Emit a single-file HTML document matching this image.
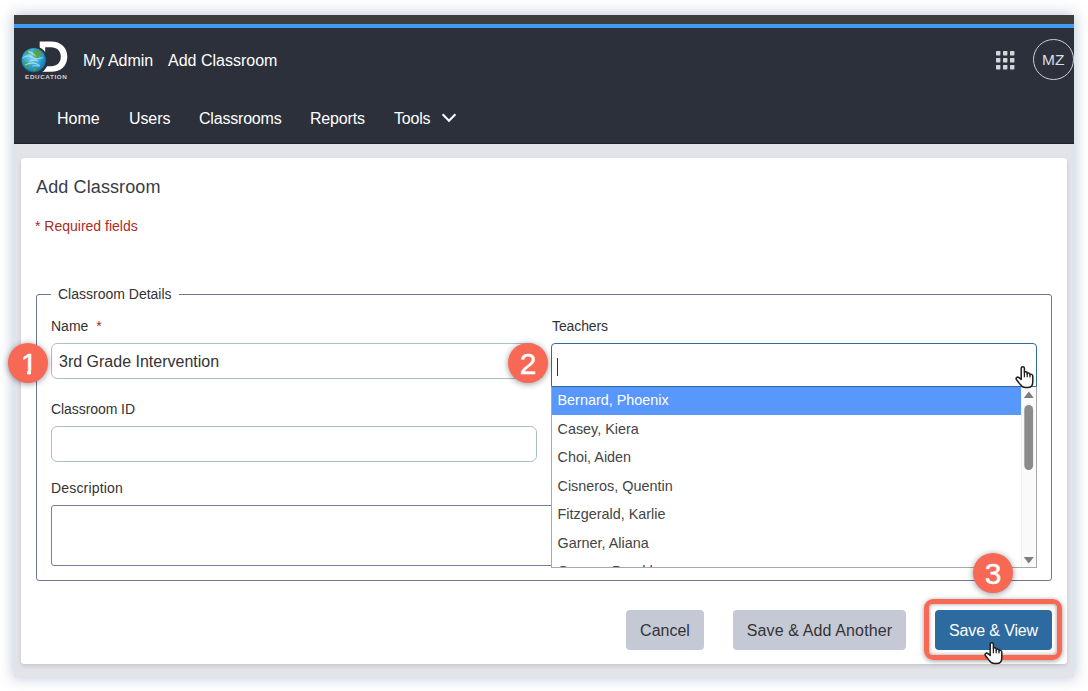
<!DOCTYPE html>
<html lang="en">
<head>
<meta charset="utf-8">
<title>Add Classroom</title>
<style>
*{box-sizing:border-box;margin:0;padding:0}
html,body{width:1088px;height:691px;overflow:hidden;background:#fff}
body{font-family:"Liberation Sans",Arial,sans-serif;position:relative;color:#333}
.frame{position:absolute;left:14px;top:15px;width:1060px;height:662px;background:#e3e4ea;box-shadow:0 0 13px 1px rgba(100,122,165,.42);overflow:hidden}
.abs{position:absolute;white-space:nowrap}
.topbar{position:absolute;left:0;top:0;width:100%;height:9px;background:#3d3d3d}
.bluebar{position:absolute;left:0;top:9px;width:100%;height:4px;background:#3f9cf0}
.header{position:absolute;left:0;top:13px;width:100%;height:116px;background:#2c303b;border-bottom:1px solid #20232c}
.hd{color:#fff;font-size:16px;line-height:20px}
.panel{position:absolute;left:7px;top:143px;width:1046px;height:506px;background:#fff;border-radius:3px;box-shadow:0 2px 4px rgba(0,0,0,.13)}
.lbl{font-size:14px;line-height:18px;color:#333}
.inp{position:absolute;background:#fff;border:1px solid #a9bfc9;border-radius:6px}
.badge{position:absolute;width:40px;height:40px;border-radius:50%;background:#f76855;color:#fff;font-size:30px;line-height:42px;-webkit-text-stroke:.4px #fff;text-align:center;box-shadow:0 1px 6px rgba(0,0,0,.42)}
.btn{position:absolute;height:40px;border-radius:4px;font-size:16px;line-height:41px;text-align:center;color:#333;background:#c5c9d6}
.opt{position:absolute;left:0;width:469px;height:28.4px;font-size:14.4px;line-height:28.4px;padding-left:5.5px;color:#444}
</style>
</head>
<body>
<div class="frame">
  <div class="topbar"></div>
  <div class="bluebar"></div>
  <div class="header"></div>
  <div class="panel"></div>
</div>

<!-- header -->
<svg class="abs" style="left:18px;top:38px" width="56" height="46" viewBox="18 38 56 46">
  <defs>
    <radialGradient id="gl" cx="0.42" cy="0.38" r="0.68">
      <stop offset="0" stop-color="#7fd6ee"/>
      <stop offset="0.5" stop-color="#2fa9d8"/>
      <stop offset="1" stop-color="#0f6fa6"/>
    </radialGradient>
  </defs>
  <path fill-rule="evenodd" d="M39.7 41.6 H51 C61 41.6 67.3 47.8 67.3 56.7 C67.3 65.6 61 71.8 51 71.8 H39.7 Z M45.2 47.2 H51 C57 47.2 60.8 51 60.8 56.7 C60.8 62.4 57 66.2 51 66.2 H45.2 Z" fill="#fff"/>
  <circle cx="34.2" cy="60.6" r="14" fill="#2c303b"/>
  <circle cx="33.7" cy="60" r="12.1" fill="url(#gl)"/>
  <path d="M24.3 54 q2 -3.5 5.5 -4.6 q1.6 .8 -.6 2.8 q-1.200 2.800 -4.900 1.800 z M33.800 50.400 q3.400 -1.600 6.800 .6 q2.200 2.200 1.600 4.400 q-2.400 -.6 -3.200 1.400 q-1.400 2.600 -3.400 1.200 q-2.200 .4 -3 -1.800 q1.200 -1.800 .2 -3.400 q.2 -1.800 1 -2.400z M23.800 61 q3.200 .4 4.800 3.600 q1.400 3 -.2 4 q-3.600 -2.400 -4.600 -7.600z M32.600 68.600 q2.200 -2 4.800 -.6 q-.4 2.600 -3.600 3.200 q-1.600 -1 -1.200 -2.600z" fill="#5a9c3c" opacity=".85"/>
  <path d="M23 57.800 q5 -3.600 9.800 -.6 q4.200 2.600 9.800 .4 M25.500 64.800 q7 -3.800 14 .4 M28.500 51.500 q4.500 1 6.500 4.500 M30 61 q4 -2 8 0 M33 66 q3 -1 6 .5" stroke="#eafaff" stroke-width="1.300" fill="none" opacity=".5" stroke-linecap="round"/>
  <circle cx="33.700" cy="60" r="12.100" fill="none" stroke="#0d5f8f" stroke-width=".6" opacity=".5"/>
  <text x="25.1" y="79.1" font-family="Liberation Sans, Arial, sans-serif" font-weight="bold" font-size="5" letter-spacing=".5" fill="#d4d4d8" textLength="42.3" lengthAdjust="spacingAndGlyphs">EDUCATION</text>
</svg>
<span class="abs hd" id="t_myadmin" style="left:83px;top:51px">My Admin</span>
<span class="abs hd" id="t_addc" style="left:168px;top:51px">Add Classroom</span>
<svg class="abs" style="left:996px;top:51px" width="19" height="19" viewBox="0 0 19 19" fill="#d4d5d9">
  <rect x="0" y="0" width="4.4" height="4.4" rx=".6"/><rect x="7" y="0" width="4.4" height="4.4" rx=".6"/><rect x="14" y="0" width="4.4" height="4.4" rx=".6"/>
  <rect x="0" y="7" width="4.4" height="4.4" rx=".6"/><rect x="7" y="7" width="4.4" height="4.4" rx=".6"/><rect x="14" y="7" width="4.4" height="4.4" rx=".6"/>
  <rect x="0" y="14" width="4.4" height="4.4" rx=".6"/><rect x="7" y="14" width="4.4" height="4.4" rx=".6"/><rect x="14" y="14" width="4.4" height="4.4" rx=".6"/>
</svg>
<div class="abs" style="left:1033px;top:39px;width:41px;height:41px;border:1.4px solid #cfd0d4;border-radius:50%"></div>
<span class="abs" id="t_mz" style="left:1042px;top:50px;font-size:15.5px;line-height:20px;color:#dcdde0">MZ</span>

<span class="abs hd" id="n_home" style="left:57px;top:109px">Home</span>
<span class="abs hd" id="n_users" style="left:129px;top:109px;letter-spacing:-.1px">Users</span>
<span class="abs hd" id="n_class" style="left:199px;top:109px;letter-spacing:-.2px">Classrooms</span>
<span class="abs hd" id="n_rep" style="left:310px;top:109px;letter-spacing:-.18px">Reports</span>
<span class="abs hd" id="n_tools" style="left:394px;top:109px;letter-spacing:-.2px">Tools</span>
<svg class="abs" style="left:441px;top:112px" width="16" height="12" viewBox="0 0 16 12"><path d="M1.6 2.2 L8 8.8 L14.4 2.2" stroke="#fff" stroke-width="2" fill="none"/></svg>

<!-- panel content -->
<span class="abs" id="h_add" style="left:36px;top:176px;font-size:18px;line-height:22px;letter-spacing:.12px;color:#373c48">Add Classroom</span>
<span class="abs" id="t_req" style="left:35px;top:217px;font-size:14px;line-height:18px;color:#ab2d22">* Required fields</span>

<div class="abs" style="left:36px;top:294px;width:1016px;height:287px;border:1px solid #6c7896;border-radius:3px"></div>
<span class="abs lbl" id="l_legend" style="left:51px;top:285px;padding:0 7px;background:#fff">Classroom Details</span>

<span class="abs lbl" id="l_name" style="left:51px;top:317px">Name&nbsp; <span style="color:#a3291f">*</span></span>
<div class="inp" style="left:51px;top:343px;width:486px;height:36px"></div>
<span class="abs" id="v_name" style="left:59px;top:352px;font-size:16px;line-height:20px;color:#333">3rd Grade Intervention</span>

<span class="abs lbl" id="l_cid" style="left:51px;top:400px;letter-spacing:-.07px">Classroom ID</span>
<div class="inp" style="left:51px;top:426px;width:486px;height:36px"></div>

<span class="abs lbl" id="l_desc" style="left:51px;top:479px;letter-spacing:.18px">Description</span>
<div class="inp" style="left:51px;top:505px;width:520px;height:61px;border-color:#727e9b;border-radius:3px"></div>

<span class="abs lbl" id="l_teach" style="left:552px;top:317px;letter-spacing:-.1px">Teachers</span>

<!-- teachers multiselect -->
<div class="abs" style="left:551px;top:343px;width:486px;height:44px;background:#fff;border:1px solid #2f6aa3;border-radius:4px 4px 0 0"></div>
<div class="abs" style="left:557px;top:358px;width:1px;height:18px;background:#333"></div>
<div class="abs" id="dd" style="left:551px;top:386px;width:486px;height:182px;background:#fff;border:1px solid #a8a8a8;border-top:1px solid #2f6aa3;overflow:hidden">
  <div class="opt" id="o1" style="top:-0.8px;background:#5897fb;color:#fff">Bernard, Phoenix</div>
  <div class="opt" id="o2" style="top:27.8px">Casey, Kiera</div>
  <div class="opt" id="o3" style="top:56.2px">Choi, Aiden</div>
  <div class="opt" id="o4" style="top:84.6px">Cisneros, Quentin</div>
  <div class="opt" id="o5" style="top:113px">Fitzgerald, Karlie</div>
  <div class="opt" id="o6" style="top:141.6px">Garner, Aliana</div>
  <div class="opt" id="o7" style="top:169.6px">Gomez, Brooklyn</div>
  <div class="abs" style="left:469px;top:0;width:16px;height:181px;background:#fafafa;border-left:1px solid #f1f1f1"></div>
  <svg class="abs" style="left:469px;top:0" width="16" height="181" viewBox="0 0 16 181">
    <path d="M7.800 4.600 L12.800 11 H2.800 Z" fill="#7d7d7d"/>
    <rect x="3.3" y="18" width="8.8" height="65" rx="4.4" fill="#8b8b8b"/>
    <path d="M7.800 176.400 L12.800 170 H2.800 Z" fill="#7d7d7d"/>
  </svg>
</div>

<!-- buttons -->
<div class="btn" id="b_cancel" style="left:626px;top:610px;width:78px">Cancel</div>
<div class="btn" id="b_saveadd" style="left:733px;top:610px;width:173px;letter-spacing:.12px">Save &amp; Add Another</div>
<div class="abs" style="left:924px;top:599px;width:138px;height:61px;border:5px solid #f76855;border-radius:9px;box-shadow:0 1px 5px rgba(0,0,0,.4), inset 0 0 4px rgba(0,0,0,.4)"></div>
<div class="btn" id="b_save" style="left:935px;top:610px;width:117px;background:#2d6aa0;color:#fff;letter-spacing:-.12px">Save &amp; View</div>

<!-- badges -->
<div class="badge" id="bd1" style="left:8px;top:343px;padding-left:2px">1<i style="position:absolute;left:13px;top:27.4px;width:6.4px;height:5px;background:#f76855"></i><i style="position:absolute;left:23.4px;top:27.4px;width:6px;height:5px;background:#f76855"></i></div>
<div class="badge" id="bd2" style="left:508px;top:343px">2</div>
<div class="badge" id="bd3" style="left:973px;top:553px">3</div>

<!-- cursors -->
<svg class="abs" id="cur1" style="left:1015px;top:365px" width="20" height="24" viewBox="0 0 20 24">
  <path d="M6.2 14.4 V3.2 C6.2 1.1 9.4 1.1 9.4 3.2 V7.8 C9.4 6.2 12.2 6.3 12.2 7.9 V8.9 C12.2 7.5 15 7.7 15 9.3 V10.1 C15 8.9 17.8 9.1 17.8 10.9 V17 C17.8 20.4 15.7 22.6 12.5 22.6 H10.4 C8 22.6 6.6 21.4 5.2 19.4 L1.5 14.8 C0.2 12.9 2.5 11.3 4 12.7 Z" fill="#fbfbfb" stroke="#1e1e1e" stroke-width="1.5" stroke-linejoin="round"/>
  <path d="M9.4 7.8 V12.2 M12.2 8.9 V12.2 M15 10.1 V12.4" stroke="#1e1e1e" stroke-width="1.2" fill="none"/>
</svg>
<svg class="abs" id="cur2" style="left:983.5px;top:641px" width="20" height="24" viewBox="0 0 20 24">
  <path d="M6.2 14.4 V3.2 C6.2 1.1 9.4 1.1 9.4 3.2 V7.8 C9.4 6.2 12.2 6.3 12.2 7.9 V8.9 C12.2 7.5 15 7.7 15 9.3 V10.1 C15 8.9 17.8 9.1 17.8 10.9 V17 C17.8 20.4 15.7 22.6 12.5 22.6 H10.4 C8 22.6 6.6 21.4 5.2 19.4 L1.5 14.8 C0.2 12.9 2.5 11.3 4 12.7 Z" fill="#fbfbfb" stroke="#1e1e1e" stroke-width="1.5" stroke-linejoin="round"/>
  <path d="M9.4 7.8 V12.2 M12.2 8.9 V12.2 M15 10.1 V12.4" stroke="#1e1e1e" stroke-width="1.2" fill="none"/>
</svg>
</body>
</html>
